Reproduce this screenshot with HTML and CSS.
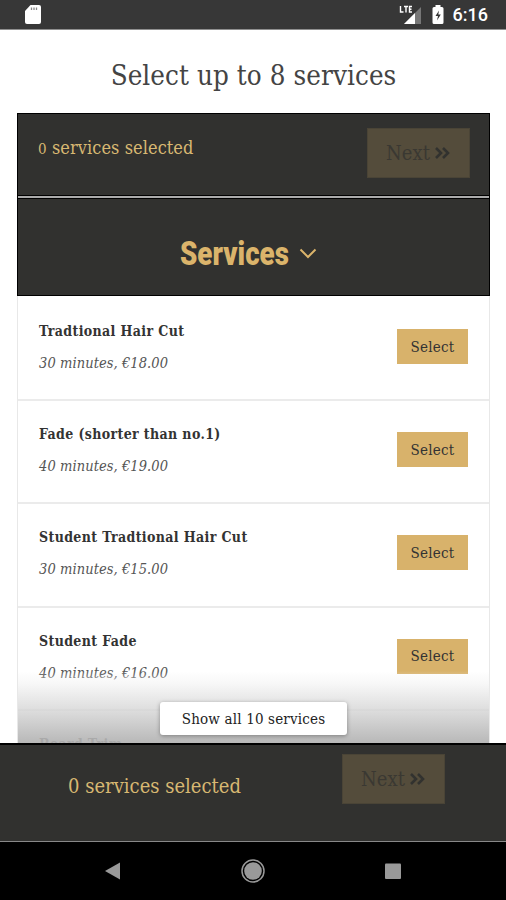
FILE: index.html
```html
<!DOCTYPE html>
<html lang="en">
<head>
<meta charset="utf-8">
<title>Select services</title>
<link rel="stylesheet" href="styles.css">
</head>
<body>
<div class="status">
  <svg class="sd" width="18" height="21" viewBox="0 0 18 21"><path d="M6.500 1H15Q17 1 17 3V18Q17 20 15 20H3Q1 20 1 18V7Z" fill="#fff"/><path d="M7.500 3.500V6M10 3.500V6M12.500 3.500V6" stroke="#888" stroke-width="1.300"/></svg>
  <div class="indicators">
    <svg width="24" height="21" viewBox="0 0 24 21"><path d="M22 3V20H5Z" fill="#777"/><path d="M16 9V20H5Z" fill="#fff"/><path d="M1.500 2V8H4.500M5 2.500H9M7 2.500V8.500M13 2.500H10.500V8H13M10.500 5.200H12.500" fill="none" stroke="#fff" stroke-width="1.400"/></svg>
    <svg class="battery" width="12" height="21" viewBox="0 0 12 21"><path d="M3.500 1H8.500V3H10Q11.500 3 11.500 4.500V18.500Q11.500 20 10 20H2Q.5 20 .5 18.500V4.500Q.5 3 2 3H3.500Z" fill="#fff"/><path d="M7 6.500L3.500 12H6L5 16.500L8.800 10.500H6.300Z" fill="#333"/></svg>
    <span class="clock">6:16</span>
  </div>
</div>
<main class="page">
  <h1 class="title">Select up to 8 services</h1>
  <section class="card">
    <div class="summary">
      <span class="count"><span class="small-digit">0</span> services selected</span>
      <button class="next"><span>Next</span><svg width="17" height="14" viewBox="0 0 17 14"><path d="M2 2L7 7L2 12M9 2L14 7L9 12" fill="none" stroke="#32322f" stroke-width="2.600"/></svg></button>
    </div>
    <div class="group">
      <h2 class="group-name">Services</h2>
      <svg width="18" height="12" viewBox="0 0 18 12"><path d="M1.500 1.500L9 9L16.500 1.500" fill="none" stroke="#dbb46b" stroke-width="2"/></svg>
    </div>
    <div class="list">
      <div class="row"><div><div class="name">Tradtional Hair Cut</div><div class="meta">30 minutes, €18.00</div></div><button class="select">Select</button></div>
      <div class="row"><div><div class="name">Fade (shorter than no.1)</div><div class="meta">40 minutes, €19.00</div></div><button class="select">Select</button></div>
      <div class="row"><div><div class="name">Student Tradtional Hair Cut</div><div class="meta">30 minutes, €15.00</div></div><button class="select">Select</button></div>
      <div class="row"><div><div class="name">Student Fade</div><div class="meta">40 minutes, €16.00</div></div><button class="select">Select</button></div>
      <div class="row"><div><div class="name">Beard Trim</div></div></div>
      <div class="fade"><button class="show-all">Show all 10 services</button></div>
    </div>
  </section>
</main>
<footer class="bottom">
  <span class="count">0 services selected</span>
  <button class="next"><span>Next</span><svg width="17" height="14" viewBox="0 0 17 14"><path d="M2 2L7 7L2 12M9 2L14 7L9 12" fill="none" stroke="#32322f" stroke-width="2.600"/></svg></button>
</footer>
<nav class="nav">
  <svg width="24" height="24" viewBox="0 0 24 24"><path d="M4 12L19 3.500V20.500Z" fill="#999"/></svg>
  <svg width="24" height="24" viewBox="0 0 24 24"><circle cx="12" cy="12" r="11" fill="none" stroke="#999" stroke-width="1.500"/><circle cx="12" cy="12" r="8.800" fill="#999"/></svg>
  <svg width="24" height="24" viewBox="0 0 24 24"><rect x="4" y="4.500" width="16" height="15.500" rx="1" fill="#999"/></svg>
</nav>
</body>
</html>
```
FILE: styles.css
```css
* { box-sizing: border-box; }
body {
  margin: 0;
  width: 506px;
  height: 900px;
  overflow: hidden;
  display: flex;
  flex-direction: column;
  background: #fff;
  color: #333;
  font-family: "DejaVu Serif Condensed", "DejaVu Serif", serif;
  font-stretch: condensed;
}
button, h1, h2 { font: inherit; margin: 0; padding: 0; border: 0; color: inherit; }
.status {
  flex: none;
  height: 30px;
  padding: 0 18px 0 24px;
  display: flex;
  align-items: center;
  justify-content: space-between;
  background: #373737;
  border-bottom: 1px solid #8f8f8f;
}
.indicators { display: flex; align-items: center; }
.battery { margin: 0 9px 0 9px; }
.clock { font: 500 18px/20px Roboto, sans-serif; color: #fff; }
.page { flex: none; height: 713px; padding: 0 16px 0 17px; overflow: hidden; }
.title {
  height: 83px;
  line-height: 90px;
  text-align: center;
  font-size: 27.500px;
  letter-spacing: 0.080px;
  white-space: nowrap;
  color: #444;
}
.card { height: 630px; display: flex; flex-direction: column; }
.summary {
  flex: none;
  height: 83px;
  padding: 14px 19px 0 20px;
  display: flex;
  justify-content: space-between;
  align-items: flex-start;
  background: #31312f;
  border: 1px solid #000;
}
.count { color: #d8b872; font-size: 18px; line-height: 40px; letter-spacing: 0.080px; white-space: nowrap; }
.small-digit { font-size: 15px; }
.next {
  width: 103px;
  height: 50px;
  display: flex;
  align-items: center;
  justify-content: center;
  gap: 4px;
  background: #544c3b;
  border: 1px solid #4a4436;
  color: #3a3832;
  font-size: 20px;
}
.group {
  flex: none;
  height: 100px;
  padding-top: 17px;
  border: 1px solid #000;
  border-top: 0;
  box-shadow: inset 0 2px #aaa, inset 0 3px #000;
  background: #31312f;
  display: flex;
  align-items: center;
  justify-content: center;
  gap: 11px;
}
.group-name {
  width: 108px;
  margin-left: -11px;
  font: 900 33px/40px Roboto, sans-serif;
  color: #dbb46b;
  transform: scaleX(0.840);
  transform-origin: left;
}
.list { position: relative; flex: 1; overflow: hidden; padding-top: 2px; border: solid #e8e8e8; border-width: 0 1px; }
.row {
  height: 103.200px;
  padding: 20px 21px 0 21px;
  display: flex;
  justify-content: space-between;
  align-items: flex-start;
  border-bottom: 2px solid #ebebeb;
}
.name { font-weight: bold; font-size: 14px; line-height: 26px; letter-spacing: 0.370px; white-space: nowrap; }
.meta { margin-top: 6px; font-size: 14.500px; line-height: 26px; letter-spacing: 0.080px; font-style: italic; color: #555; white-space: nowrap; }
.select { width: 71px; height: 35px; margin-top: 11px; background: #d8b26b; font-size: 15px; letter-spacing: 0.250px; }
.fade {
  position: absolute;
  left: 0;
  right: 0;
  bottom: 0;
  height: 72px;
  display: flex;
  justify-content: center;
  align-items: flex-end;
  padding-bottom: 8px;
  background: linear-gradient(rgba(255,255,255,0), rgba(242,242,242,.6) 18%, rgba(212,212,212,.8) 55%, rgba(178,178,178,.92));
}
.show-all { width: 187px; height: 33px; border-radius: 3px; background: #fff; box-shadow: 0 1px 4px rgba(0,0,0,.35); font-size: 15px; letter-spacing: 0.170px; white-space: nowrap; color: #222; }
.bottom {
  flex: none;
  height: 99px;
  padding: 9px 61px 0 68px;
  display: flex;
  justify-content: space-between;
  align-items: flex-start;
  background: #31312f;
  border-top: 2px solid #000;
  border-bottom: 1px solid #888;
}
.bottom .count { font-size: 20px; line-height: 64px; letter-spacing: 0; }
.nav { flex: 1; padding: 0 101px; display: flex; justify-content: space-between; align-items: center; background: #000; }
```
